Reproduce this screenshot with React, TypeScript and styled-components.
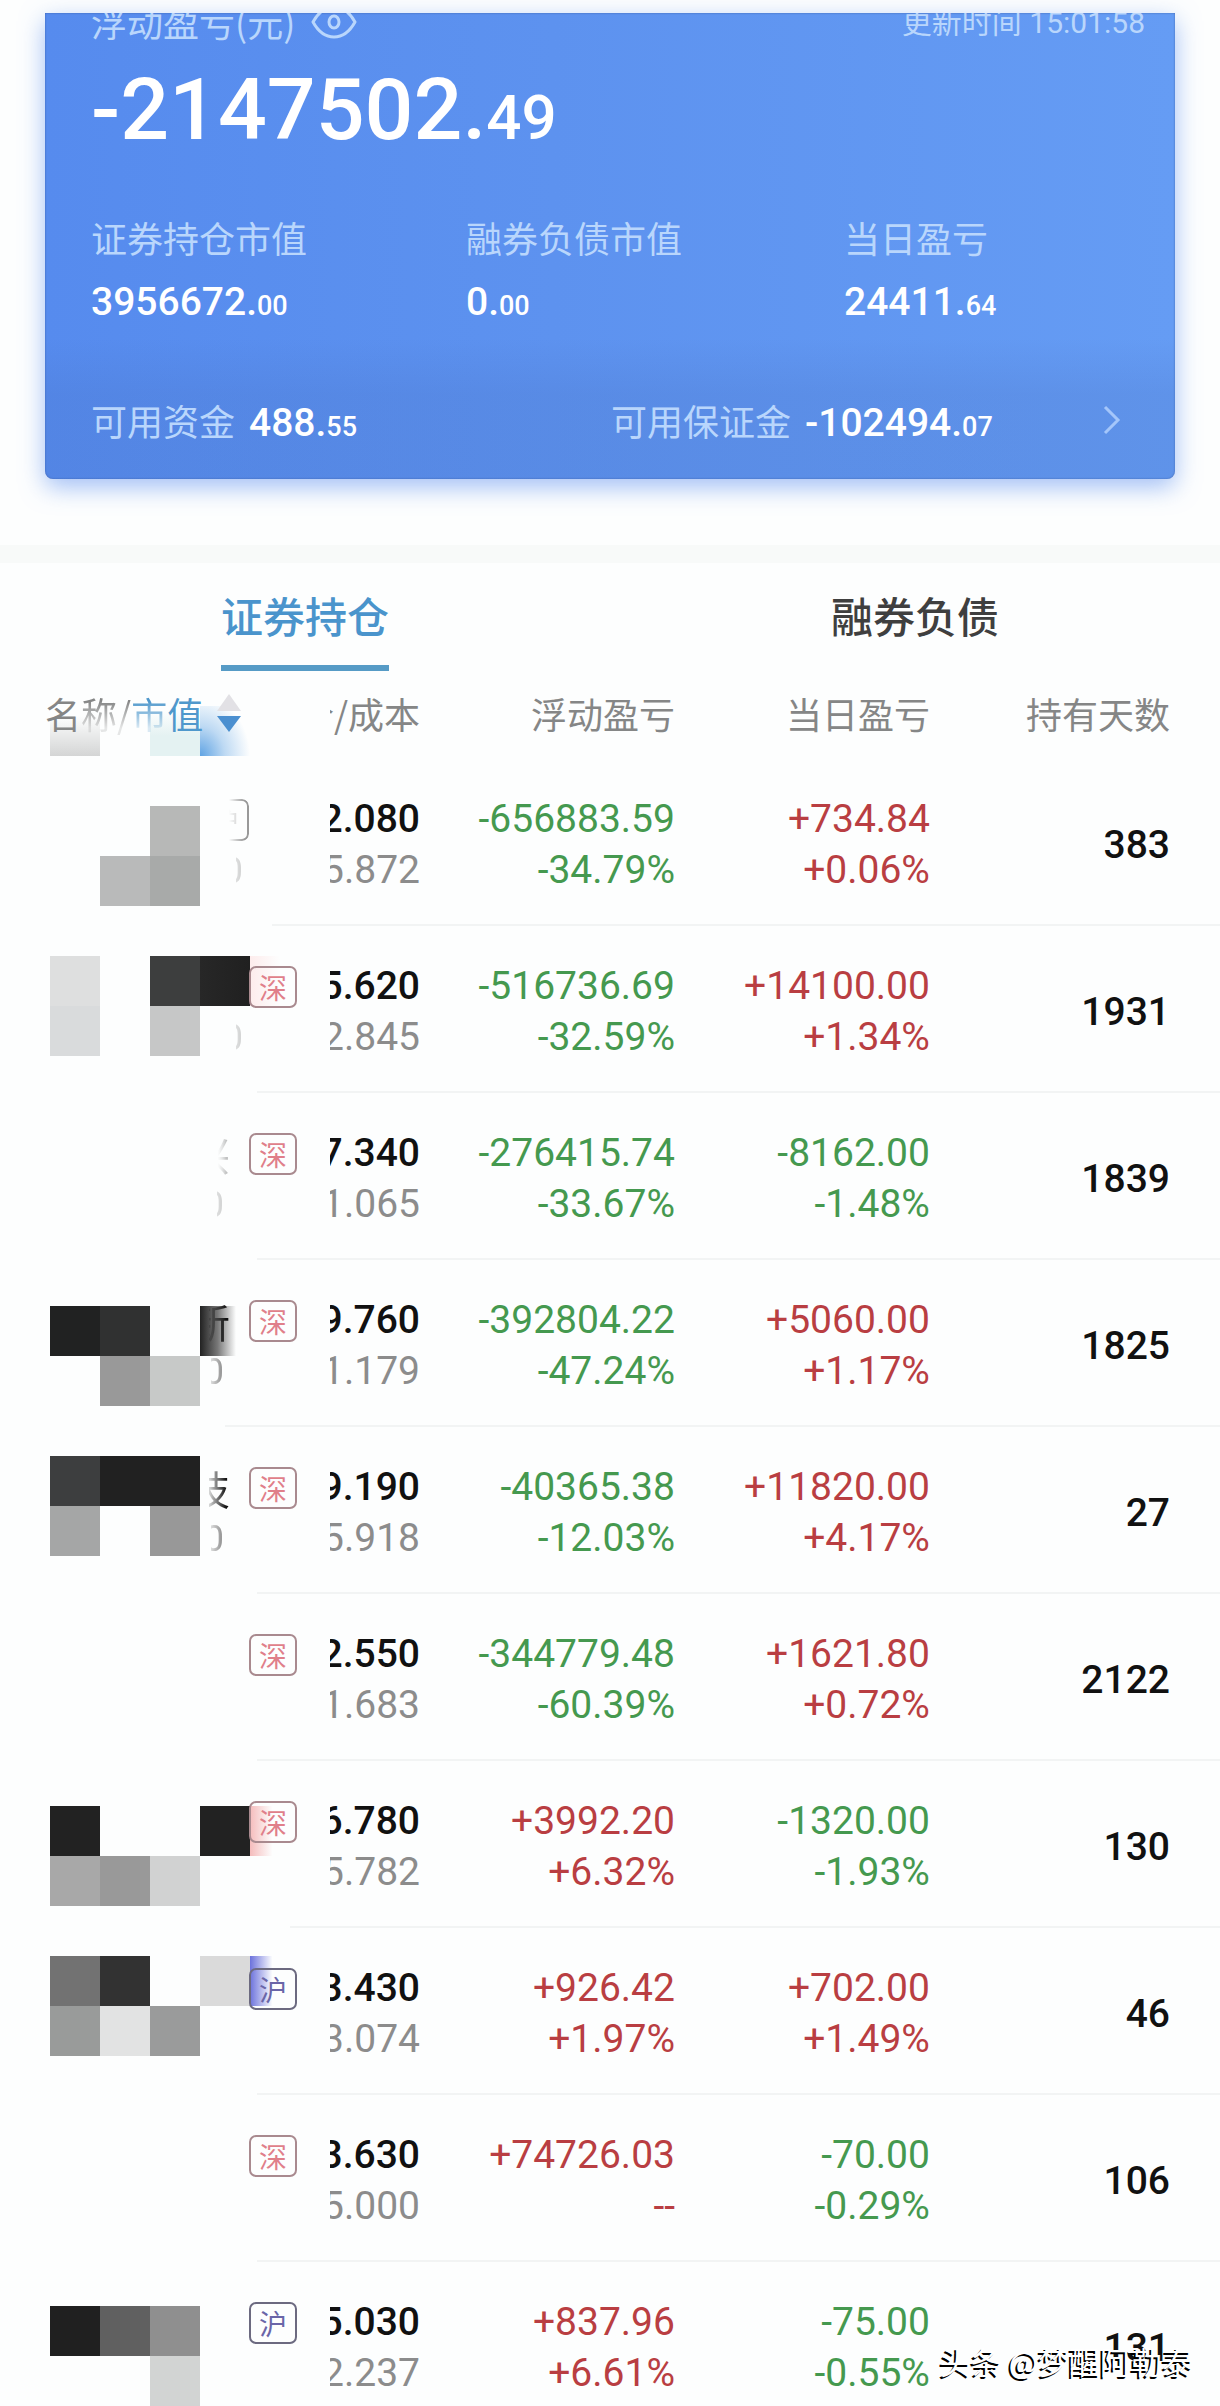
import React from 'react';
import styled, { createGlobalStyle } from 'styled-components';

const numFont = `Roboto, "Liberation Sans", "Noto Sans CJK SC", sans-serif`;
const GREEN = '#45994f';
const RED = '#b93e42';

const GlobalStyle = createGlobalStyle`
  *, *::before, *::after { box-sizing: border-box; }
  body { margin: 0; background: #fdfefe; }
  button { border: 0; padding: 0; background: none; font: inherit; color: inherit; cursor: pointer; }
`;

const Page = styled.main`
  position: relative;
  height: 100vh;
  overflow: hidden;
  padding-top: 13px;
  background: #fdfefe;
  color: #111;
  font-family: "Noto Sans CJK SC", sans-serif;
  font-size: 36px;
`;

const Card = styled.section`
  display: flex;
  flex-direction: column;
  margin: 0 45px;
  height: 466px;
  overflow: hidden;
  border-radius: 0 0 8px 8px;
  background: linear-gradient(90deg, #568bee, #5d92ef 45%, #659cf4);
  box-shadow: 0 8px 24px rgba(86, 139, 238, 0.55), inset 0 0 2px rgba(50, 80, 150, 0.8);
  color: #fff;
`;

const CardTop = styled.header`
  display: flex;
  justify-content: space-between;
  align-items: center;
  margin-top: -12px;
  padding: 0 30px 0 46px;
  height: 40px;
  line-height: 40px;
  color: #b9d6fc;
`;

const Title = styled.h1`
  display: flex;
  align-items: center;
  gap: 16px;
  margin: 0;
  font-size: 36px;
  font-weight: 400;
`;

const EyeButton = styled.button`
  display: flex;
`;

const Updated = styled.span`
  padding-top: 4px;
  font-family: ${numFont};
  font-size: 30px;
`;

const Total = styled.p`
  margin: 17px 0 0;
  padding-left: 46px;
  font-family: ${numFont};
  font-size: 86px;
  font-weight: 500;
  line-height: 104px;
  small { font-size: 62px; }
`;

const Stats = styled.dl`
  display: grid;
  grid-template-columns: 375fr 378fr 285fr;
  margin: 34px 46px 0;
`;

const Label = styled.dt`
  line-height: 66px;
  color: #b9d6fc;
`;

const Value = styled.dd`
  margin: 0;
  font-family: ${numFont};
  font-size: 39px;
  font-weight: 500;
  line-height: 64px;
  small { font-size: 27px; }
`;

const Funds = styled.dl`
  display: flex;
  flex: 1;
  align-items: center;
  margin: 0;
  padding: 22px 54px 0 46px;
  background: linear-gradient(180deg, rgba(70, 110, 190, 0), rgba(70, 110, 190, 0.2) 40%);
`;

const Fund = styled.div<{ $grow: number }>`
  display: flex;
  align-items: center;
  gap: 14px;
  flex: ${(p) => p.$grow} 0 0;
  dd { padding-top: 10px; }
`;

const Band = styled.div`
  height: 18px;
  margin-top: 66px;
  background: #f8faf9;
`;

const Tabs = styled.nav`
  display: grid;
  grid-template-columns: 1fr 1fr;
  justify-items: center;
`;

const Tab = styled.button<{ $active?: boolean }>`
  height: 108px;
  padding-top: 2px;
  border-bottom: 6px solid ${(p) => (p.$active ? '#569bc6' : 'transparent')};
  font-size: 42px;
  font-weight: 500;
  line-height: 100px;
  color: ${(p) => (p.$active ? '#4a94cc' : '#3f3f3f')};
`;

const Table = styled.table`
  width: 100%;
  table-layout: fixed;
  border-collapse: collapse;
`;

const Head = styled.th<{ $w?: string }>`
  width: ${(p) => p.$w ?? 'auto'};
  height: 88px;
  padding: 0 ${(p) => (p.$w ? 0 : 50)}px 0 0;
  text-align: right;
  vertical-align: top;
  font-size: 36px;
  font-weight: 400;
  line-height: 84px;
  color: #858686;
`;

const NameHead = styled.div`
  display: grid;
`;

const SortButton = styled.button`
  grid-area: 1 / 1;
  z-index: 1;
  display: flex;
  align-items: center;
  padding-left: 45px;
  em { font-style: normal; color: #4f98cc; }
  svg { margin-left: 14px; }
`;

const Faded = styled.span`
  display: inline-block;
  mask-image: linear-gradient(180deg, #000 36%, rgba(0, 0, 0, 0.2) 68%);
`;

const HeadBlur = styled.div`
  grid-area: 1 / 1;
  display: grid;
  grid-template-columns: repeat(4, 50px);
  align-self: end;
  height: 50px;
  margin: 0 0 -1px 50px;
`;

const Haze = styled.span<{ $bg: string }>`
  background: ${(p) => p.$bg};
`;

const Clip = styled.div`
  display: flex;
  justify-content: flex-end;
  overflow: hidden;
  white-space: nowrap;
`;

const Row = styled.tr<{ $line: number }>`
  height: 167px;
  background: linear-gradient(#f2f4f4, #f2f4f4) ${(p) => p.$line}px 100% / 100% 2px no-repeat;
`;

const Cell = styled.td<{ $last?: boolean }>`
  padding: 5px ${(p) => (p.$last ? 50 : 0)}px 0 0;
  text-align: right;
  font-family: ${numFont};
  font-size: 39px;
  line-height: 51px;
`;

const NameCell = styled.td`
  padding: 0;
  vertical-align: top;
`;

const NameLayout = styled.div`
  display: grid;
  grid-template-columns: 249px auto;
  height: 165px;
`;

const Mosaic = styled.div<{ $top: number }>`
  grid-area: 1 / 1;
  display: grid;
  grid-template: repeat(2, 50px) / repeat(5, 50px);
  margin: ${(p) => p.$top}px 0 0 50px;
`;

const Rest = styled.div<{ $end: number }>`
  grid-area: 1 / 1;
  z-index: 1;
  display: flex;
  flex-direction: column;
  align-items: flex-end;
  padding: 36px ${(p) => 249 - p.$end}px 0 0;
  line-height: 51px;
  color: #111;
  mask-image: linear-gradient(90deg, transparent ${(p) => p.$end - 24}px, #000 ${(p) => p.$end - 4}px);
`;

const RestName = styled.span<{ $faint?: boolean }>`
  display: flex;
  justify-content: flex-end;
  width: 21px;
  overflow: hidden;
  font-size: 40px;
  opacity: ${(p) => (p.$faint ? 0.35 : 1)};
  mask-image: ${(p) => (p.$faint ? 'linear-gradient(90deg, transparent 40%, #000)' : 'none')};
`;

const RestValue = styled.span<{ $faint?: boolean }>`
  display: flex;
  justify-content: flex-end;
  width: ${(p) => (p.$faint ? 7 : 13)}px;
  margin-right: 6px;
  overflow: hidden;
  font-family: ${numFont};
  font-size: 36px;
  color: #777;
  opacity: ${(p) => (p.$faint ? 0.4 : 1)};
`;

const Badge = styled.span<{ $blue?: boolean; $faded?: boolean }>`
  grid-row: 1;
  grid-column: ${(p) => (p.$faded ? 1 : 2)};
  justify-self: ${(p) => (p.$faded ? 'end' : 'start')};
  z-index: 1;
  width: 48px;
  height: 42px;
  margin-top: 40px;
  border: 2px solid ${(p) => (p.$faded ? '#999' : p.$blue ? '#6c6a80' : '#a98a8f')};
  border-radius: 7px;
  font-size: 28px;
  line-height: 38px;
  text-align: center;
  color: ${(p) => (p.$faded ? '#bbb' : p.$blue ? '#6a65a8' : '#e07f8a')};
  mask-image: ${(p) => (p.$faded ? 'linear-gradient(90deg, transparent 58%, #000 90%)' : 'none')};
`;

const Amount = styled.div<{ $tone: string }>`
  color: ${(p) => p.$tone};
`;

const Days = styled.span`
  font-weight: 500;
`;

const Watermark = styled.div`
  position: absolute;
  right: 27px;
  bottom: 23px;
  font-size: 31px;
  line-height: 44px;
  color: #fff;
  text-shadow: -2px 2px 0 #000;
`;

type Tile = [col: number, row: number, bg: string];

interface Holding {
  price: string;
  cost: string;
  float: [string, string];
  day: [string, string];
  days: string;
  market?: '深' | '沪';
  top?: number;
  line?: number;
  tiles?: Tile[];
  rest?: { end: number; name?: string; value?: string; faint?: boolean };
}

const holdings: Holding[] = [
  { price: '2.080', cost: '5.872', float: ['-656883.59', '-34.79%'], day: ['+734.84', '+0.06%'], days: '383', top: 47, line: 272,
    tiles: [[3, 1, '#b7b8b7'], [2, 2, '#b9baba'], [3, 2, '#a8aaa9']], rest: { end: 249, value: '0', faint: true } },
  { price: '5.620', cost: '2.845', float: ['-516736.69', '-32.59%'], day: ['+14100.00', '+1.34%'], days: '1931', market: '深', top: 30,
    tiles: [[1, 1, '#dedfdf'], [3, 1, '#3d3e3e'], [4, 1, 'linear-gradient(90deg, #272727, #202020)'], [5, 1, 'linear-gradient(90deg, #fdecec, transparent 60%)'], [1, 2, '#d9dbdc'], [3, 2, '#c6c7c7']], rest: { end: 249, value: '0', faint: true } },
  { price: '7.340', cost: '1.065', float: ['-276415.74', '-33.67%'], day: ['-8162.00', '-1.48%'], days: '1839', market: '深',
    rest: { end: 230, name: '兴', value: '0', faint: true } },
  { price: '9.760', cost: '1.179', float: ['-392804.22', '-47.24%'], day: ['+5060.00', '+1.17%'], days: '1825', market: '深', top: 46, line: 225,
    tiles: [[1, 1, '#212222'], [2, 1, '#303131'], [4, 1, 'linear-gradient(90deg, #222, #777 35%, transparent 72%)'], [2, 2, '#999'], [3, 2, '#c7c9c8']], rest: { end: 230, name: '新', value: '0' } },
  { price: '9.190', cost: '5.918', float: ['-40365.38', '-12.03%'], day: ['+11820.00', '+4.17%'], days: '27', market: '深', top: 29,
    tiles: [[1, 1, '#3d3e3f'], [2, 1, '#212121'], [3, 1, '#212121'], [1, 2, '#a5a6a6'], [3, 2, '#989898']], rest: { end: 230, name: '技', value: '0' } },
  { price: '2.550', cost: '1.683', float: ['-344779.48', '-60.39%'], day: ['+1621.80', '+0.72%'], days: '2122', market: '深' },
  { price: '6.780', cost: '5.782', float: ['+3992.20', '+6.32%'], day: ['-1320.00', '-1.93%'], days: '130', market: '深', top: 45, line: 290,
    tiles: [[1, 1, '#222'], [4, 1, '#222'], [5, 1, 'linear-gradient(90deg, #f5bcbc, transparent 45%)'], [1, 2, '#a8a8a8'], [2, 2, '#999'], [3, 2, '#d1d2d2']] },
  { price: '3.430', cost: '3.074', float: ['+926.42', '+1.97%'], day: ['+702.00', '+1.49%'], days: '46', market: '沪', top: 28,
    tiles: [[1, 1, '#727272'], [2, 1, '#323232'], [4, 1, '#dadada'], [5, 1, 'linear-gradient(90deg, #6c72dc, transparent 45%)'], [1, 2, '#999b9a'], [2, 2, '#e2e3e3'], [3, 2, '#9a9b9b']] },
  { price: '3.630', cost: '5.000', float: ['+74726.03', '--'], day: ['-70.00', '-0.29%'], days: '106', market: '深' },
  { price: '5.030', cost: '2.237', float: ['+837.96', '+6.61%'], day: ['-75.00', '-0.55%'], days: '131', market: '沪', top: 44,
    tiles: [[1, 1, '#202020'], [2, 1, '#606060'], [3, 1, '#8f8f8f'], [3, 2, '#d2d4d3']] },
];

const tone = (v: string) => (v.startsWith('+') ? RED : GREEN);

function Money({ value }: { value: string }) {
  const [whole, cents] = value.split('.');
  return <>{whole}.<small>{cents}</small></>;
}

function Pair({ values }: { values: [string, string] }) {
  return (
    <Cell>
      {values.map((v) => <Amount key={v} $tone={tone(values[0])}>{v}</Amount>)}
    </Cell>
  );
}

export default function App() {
  return (
    <Page>
      <GlobalStyle />
      <Card>
        <CardTop>
          <Title>
            浮动盈亏(元)
            <EyeButton aria-label="显示或隐藏金额">
              <svg width="46" height="40" viewBox="0 0 46 40" fill="none" stroke="#b9d6fc" strokeWidth="3">
                <path d="M2 21C7 12 14 6 23 6s16 6 21 15C39 30 32 36 23 36S7 30 2 21Z" strokeLinejoin="round" />
                <ellipse cx="23" cy="21" rx="5" ry="6" />
              </svg>
            </EyeButton>
          </Title>
          <Updated>更新时间 15:01:58</Updated>
        </CardTop>
        <Total><Money value="-2147502.49" /></Total>
        <Stats>
          <div><Label>证券持仓市值</Label><Value><Money value="3956672.00" /></Value></div>
          <div><Label>融券负债市值</Label><Value><Money value="0.00" /></Value></div>
          <div><Label>当日盈亏</Label><Value><Money value="24411.64" /></Value></div>
        </Stats>
        <Funds>
          <Fund $grow={521}><Label>可用资金</Label><Value><Money value="488.55" /></Value></Fund>
          <Fund $grow={493}><Label>可用保证金</Label><Value><Money value="-102494.07" /></Value></Fund>
          <svg width="18" height="30" viewBox="0 0 18 30" fill="none" stroke="#a4c6fa" strokeWidth="3">
            <path d="M2 2l13 13L2 28" />
          </svg>
        </Funds>
      </Card>
      <Band />
      <Tabs>
        <Tab $active>证券持仓</Tab>
        <Tab>融券负债</Tab>
      </Tabs>
      <Table>
        <thead>
          <tr>
            <Head $w="330px">
              <NameHead>
                <HeadBlur>
                  <Haze $bg="linear-gradient(180deg, transparent 20%, #d4d5d5)" />
                  <Haze $bg="none" />
                  <Haze $bg="linear-gradient(180deg, transparent 10%, #e4f2f2 60%)" />
                  <Haze $bg="radial-gradient(ellipse 50px 60px at 0 100%, #5fa3e3, rgba(95, 163, 227, 0.4) 50%, transparent)" />
                </HeadBlur>
                <SortButton>
                  名<Faded>称/</Faded><em><Faded>市</Faded>值</em>
                  <svg width="24" height="40" viewBox="0 0 24 40">
                    <path d="M12 1l12 17H0z" fill="#e2e1e5" />
                    <path d="M12 39L0 23h24z" fill="#4a8fd0" />
                  </svg>
                </SortButton>
              </NameHead>
            </Head>
            <Head $w="90px"><Clip>现价/成本</Clip></Head>
            <Head $w="20.9%">浮动盈亏</Head>
            <Head $w="20.9%">当日盈亏</Head>
            <Head>持有天数</Head>
          </tr>
        </thead>
        <tbody>
          {holdings.map((h) => (
            <Row key={h.price} $line={h.line ?? 257}>
              <NameCell>
                <NameLayout>
                  {h.tiles && (
                    <Mosaic $top={h.top ?? 0}>
                      {h.tiles.map(([c, r, bg]) => (
                        <Haze key={`${c}-${r}`} $bg={bg} style={{ gridArea: `${r} / ${c}` }} />
                      ))}
                    </Mosaic>
                  )}
                  {h.rest && (
                    <Rest $end={h.rest.end}>
                      <RestName $faint={h.rest.faint}>{h.rest.name ?? '\u00a0'}</RestName>
                      <RestValue $faint={h.rest.faint}>{h.rest.value}</RestValue>
                    </Rest>
                  )}
                  <Badge $blue={h.market === '沪'} $faded={!h.market}>{h.market ?? '沪'}</Badge>
                </NameLayout>
              </NameCell>
              <Cell>
                <Clip><Days>{h.price}</Days></Clip>
                <Clip><Amount $tone="#8c8c8c">{h.cost}</Amount></Clip>
              </Cell>
              <Pair values={h.float} />
              <Pair values={h.day} />
              <Cell $last><Days>{h.days}</Days></Cell>
            </Row>
          ))}
        </tbody>
      </Table>
      <Watermark>头条 @梦醒阿勒泰</Watermark>
    </Page>
  );
}
